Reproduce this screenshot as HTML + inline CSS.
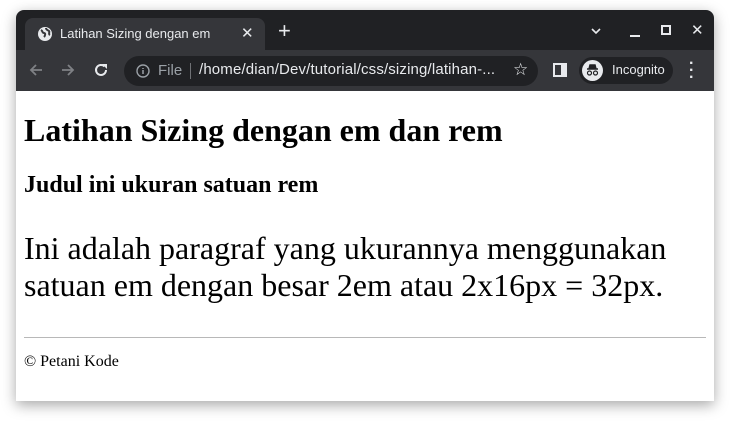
<!DOCTYPE html>
<html><head><meta charset="utf-8"><style>
*{margin:0;padding:0;box-sizing:border-box}
body{width:730px;height:433px;background:#fff;position:relative;overflow:hidden;font-family:"Liberation Sans",sans-serif}
.win{position:absolute;left:16px;top:10px;width:698px;height:391px;background:#fff;border-radius:8px 8px 0 0;overflow:hidden;box-shadow:0 4px 14px rgba(0,0,0,.35)}
.tabbar{position:absolute;left:0;top:0;width:100%;height:40px;background:#202124}
.tab{position:absolute;left:9px;top:8px;width:240px;height:32px;background:#35363a;border-radius:8px 8px 0 0;color:#e8eaed;font-size:13px}
.toolbar{position:absolute;left:0;top:40px;width:100%;height:41px;background:#35363a}
.omni{position:absolute;left:108px;top:6px;width:414px;height:30px;background:#202124;border-radius:15px;color:#e8eaed;font-size:15px}
.ic{position:absolute;color:#e8eaed}
.content{position:absolute;left:0;top:81px;width:100%;height:310px;font-family:"Liberation Serif",serif;color:#000}
</style></head><body>
<div class="win">
<div class="tabbar">
<div class="tab">
<svg style="position:absolute;left:12px;top:8px" width="16" height="16" viewBox="0 0 16 16"><circle cx="8" cy="8" r="7" fill="#e8eaed"/><path d="M4 4c2 1 1 3 3 3s1 3 0 4M9 2c0 2 2 2 3 3s-1 3 1 4" stroke="#35363a" stroke-width="2" fill="none"/></svg>
<span style="position:absolute;left:35px;top:8px">Latihan Sizing dengan em</span>
<span style="position:absolute;left:216px;top:6px;font-size:15px">✕</span>
</div>
<span class="ic" style="left:262px;top:10px;font-size:22px;line-height:22px">+</span>
<svg class="ic" style="left:574px;top:17px" width="12" height="8"><path d="M2 2l4 4 4-4" stroke="#e8eaed" stroke-width="1.6" fill="none"/></svg>
<div style="position:absolute;left:614px;top:25px;width:10px;height:2px;background:#e8eaed"></div>
<div style="position:absolute;left:645px;top:15px;width:10px;height:10px;border:2px solid #e8eaed"></div>
<span class="ic" style="left:675px;top:11px;font-size:15px">✕</span>
</div>
<div class="toolbar">
<svg style="position:absolute;left:12px;top:12px" width="16" height="16"><path d="M14 8H3M8 3L3 8l5 5" stroke="#7f8185" stroke-width="1.8" fill="none"/></svg>
<svg style="position:absolute;left:44px;top:12px" width="16" height="16"><path d="M2 8h11M8 3l5 5-5 5" stroke="#7f8185" stroke-width="1.8" fill="none"/></svg>
<svg style="position:absolute;left:77px;top:12px" width="16" height="16"><path d="M13 8a5 5 0 1 1-1.5-3.6" stroke="#e8eaed" stroke-width="2" fill="none"/><path d="M9 2h5v5z" fill="#e8eaed"/></svg>
<div class="omni">
<svg style="position:absolute;left:12px;top:8px" width="14" height="14"><circle cx="7" cy="7" r="6" stroke="#9aa0a6" stroke-width="1.4" fill="none"/><path d="M7 6v4M7 4v1" stroke="#9aa0a6" stroke-width="1.5"/></svg>
<span style="position:absolute;left:34px;top:6px;color:#9aa0a6">File</span>
<div style="position:absolute;left:66px;top:7px;width:1px;height:16px;background:#6f7175"></div>
<span style="position:absolute;left:75px;top:5px;letter-spacing:0.15px">/home/dian/Dev/tutorial/css/sizing/latihan-...</span>
<span style="position:absolute;left:389px;top:4px;font-size:17px;color:#e8eaed">☆</span>
</div>
<div style="position:absolute;left:537px;top:13px;width:14px;height:14px;border:2px solid #e8eaed;border-right-width:6px"></div>
<div style="position:absolute;left:563px;top:7px;width:94px;height:27px;background:#202124;border-radius:14px">
<div style="position:absolute;left:3px;top:3px;width:21px;height:21px;border-radius:50%;background:#e8eaed"></div>
<svg style="position:absolute;left:5px;top:6px" width="17" height="15"><path d="M3 6h11M5 6l1-4h5l1 4" stroke="#202124" stroke-width="1.5" fill="#202124"/><circle cx="5.5" cy="10" r="2" stroke="#202124" stroke-width="1.2" fill="none"/><circle cx="11.5" cy="10" r="2" stroke="#202124" stroke-width="1.2" fill="none"/></svg>
<span style="position:absolute;left:33px;top:5px;font-size:13px;color:#e8eaed">Incognito</span>
</div>
<span style="position:absolute;left:673px;top:10px;color:#e8eaed;font-size:16px;line-height:7px;font-weight:bold">·<br>·<br>·</span>
</div>
<div class="content">
<div style="position:absolute;left:8px;top:21px;font-size:32px;font-weight:bold;white-space:nowrap">Latihan Sizing dengan em dan rem</div>
<div style="position:absolute;left:8px;top:80px;font-size:24px;font-weight:bold;white-space:nowrap;line-height:28px">Judul ini ukuran satuan rem</div>
<div style="position:absolute;left:8px;top:139px;font-size:32px;line-height:37px;white-space:nowrap">Ini adalah paragraf yang ukurannya menggunakan<br>satuan em dengan besar 2em atau 2x16px = 32px.</div>
<div style="position:absolute;left:8px;top:246px;width:682px;height:1px;background:#b8b8b8"></div>
<div style="position:absolute;left:8px;top:262px;font-size:16px">© Petani Kode</div>
</div>
</div>
</body></html>
